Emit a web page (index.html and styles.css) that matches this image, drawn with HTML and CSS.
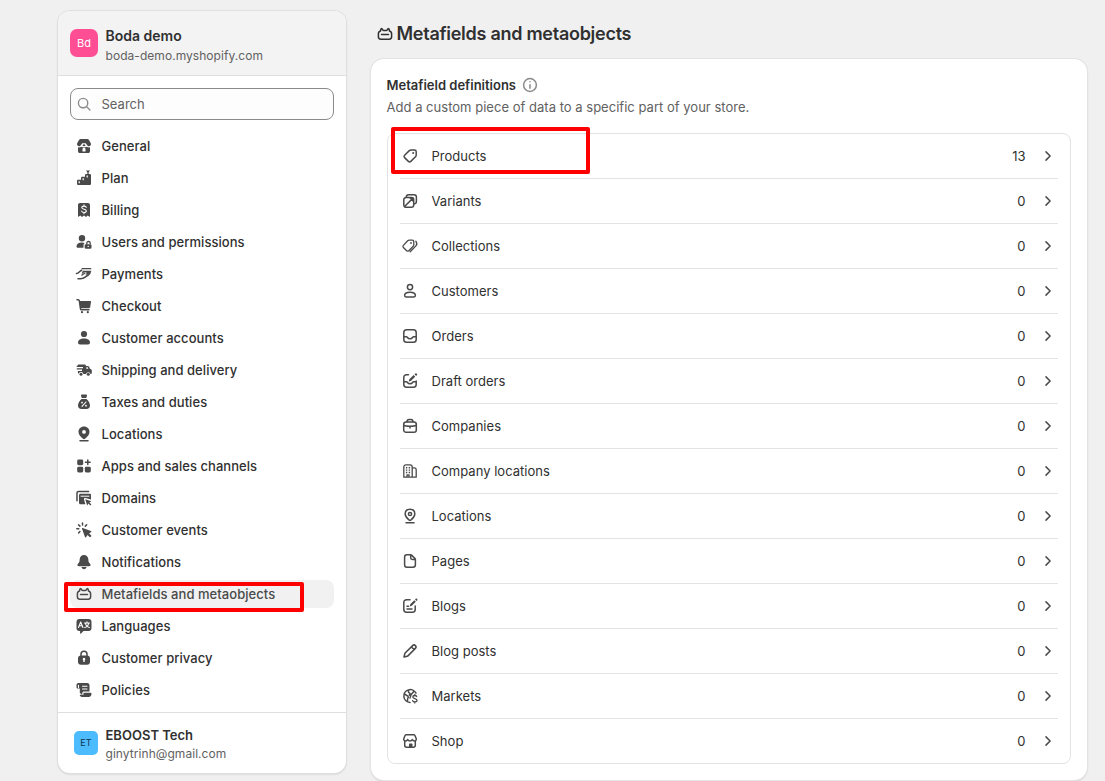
FILE: index.html
```html
<!DOCTYPE html>
<html lang="en">
<head>
<meta charset="utf-8">
<title>Metafields and metaobjects</title>
<link rel="stylesheet" href="styles.css">
</head>
<body>
<svg class="sprite" aria-hidden="true">
  <symbol id="store" viewBox="0 0 20 20"><path class="f" d="M6.500 3h7c.6 0 1.100.3 1.300.8L16.700 7c.3.6.3 1 .3 1.300 0 1.100-.9 1.900-2.100 1.900-1 0-1.700-.6-2.100-1.500L11.800 7.300H8.200L7.200 8.700c-.4.900-1.100 1.500-2.100 1.500C3.900 10.200 3 9.400 3 8.300 3 8 3.100 7.500 3.300 7l1.900-3.200c.2-.5.700-.8 1.300-.8z"/><path class="f" d="M10 7.800l1.700 2c-1 .6-2.400.6-3.400 0z"/><path class="f" fill-rule="evenodd" d="M4 11.300c1.300.3 2.300 0 3.300-.6 1.700.9 3.700.9 5.400 0 1 .6 2 .9 3.300.6v3.900c0 1-.8 1.800-1.800 1.800H5.800c-1 0-1.800-.8-1.800-1.800zm4.500 4.200h3V13c0-.5-.4-.9-.9-.9H9.400c-.5 0-.9.4-.9.900z"/></symbol>
  <symbol id="plan" viewBox="0 0 20 20"><path class="f" fill-rule="evenodd" d="M3 13c0-.8.600-1.300 1.300-1.300H7V10c0-.8.6-1.300 1.300-1.300H11V7.300C11 6.500 11.600 6 12.300 6h3.400c.7 0 1.300.5 1.300 1.300v8.400c0 .7-.6 1.300-1.300 1.300H4.300C3.600 17 3 16.400 3 15.700zm1.600.3v2h1.200v-2zm4-3v2h1.200v-2zm4-2.700v2h1.200v-2z"/><path class="f" d="M12 2.500h4l-1.300 1.700h-1.400z"/><path class="s thin" d="M14 3.700V6"/></symbol>
  <symbol id="billing" viewBox="0 0 20 20"><path class="f" d="M6 3h8c1.100 0 2 .9 2 2v12l-2.300-1.500L12 17l-2-1.500L8 17l-1.700-1.500L4 17V5c0-1.100.9-2 2-2z"/><path class="w" d="M12.300 7.300c-.3-.8-1.100-1.200-2.300-1.200-1.400 0-2.200.6-2.200 1.500 0 2.300 4.500 1 4.500 3.300 0 1-.9 1.600-2.300 1.600-1.200 0-2.100-.5-2.300-1.400M10 4.900v1.200m0 6.400v1.200"/></symbol>
  <symbol id="users" viewBox="0 0 20 20"><circle class="f" cx="8" cy="6.200" r="3.200"/><path class="f" d="M2.500 14.500c0-2.600 2.200-4 5.300-4 1.100 0 2.100.200 2.900.6-.8.600-1.200 1.200-1.200 2.200v2.500H4c-.9 0-1.500-.5-1.500-1.300z"/><rect class="f" x="10.700" y="12.200" width="6.800" height="4.600" rx="1.200"/><path class="s thin" d="M12.800 12.300v-1a1.700 1.700 0 013.400-.2v.6"/><circle cx="14.200" cy="14.400" r=".7" fill="#fff"/></symbol>
  <symbol id="payments" viewBox="0 0 20 20"><path class="f" d="M8.300 4h7.700c1 0 1.500.5 1.500 1.200H7.200C7.500 4.500 7.800 4 8.300 4zM9 6.800h8.300l-.8 2.700c-.2.800-.7 1.300-1.500 1.300h-3.600c1-.8 1.400-1.600.9-2.300-.5-.7-1.500-.5-2.400.1l-2 1.300c.1-1 .3-2 1.100-3.100z"/><path class="s" d="M2.500 9.600c2.500-.3 3.300-3.100 5.300-3.400M8 11l3-2M4 14.800h2.500c4.500 0 4.500-2.500 8-3.800"/></symbol>
  <symbol id="cart" viewBox="0 0 20 20"><path class="s" d="M3 3.700h1.200c.6 0 1 .4 1.100 1L6.500 13c.1.500.4.700.8.700H15"/><path class="f" d="M5.300 5h11c.5 0 .8.400.7.900l-.8 5.200c-.1.700-.6 1.200-1.300 1.200H6.300z"/><circle class="f" cx="8" cy="16.200" r="1.100"/><circle class="f" cx="13.800" cy="16.200" r="1.100"/></symbol>
  <symbol id="person" viewBox="0 0 20 20"><circle class="f" cx="10" cy="6" r="3.100"/><path class="f" d="M4 14.500c0-2.400 2.400-4 6-4s6 1.600 6 4c0 1.200-.8 2-2 2H6c-1.200 0-2-.8-2-2z"/></symbol>
  <symbol id="truck" viewBox="0 0 20 20"><path class="f" fill-rule="evenodd" d="M4.500 4.500h6c.9 0 1.500.6 1.500 1.500h1.800c.6 0 1 .3 1.300.8l.9 2 1 .5c.6.300.8.700.8 1.300v2.200c0 .8-.5 1.300-1.200 1.300A2.400 2.400 0 0012 14H9.400a2.400 2.400 0 00-4.700-.3c-.5-.1-.8-.5-.8-1.100V10.900H8V9.600H3.300a.7.700 0 010-1.400H9V7H3.300a.7.700 0 010-1.400h.5c0-.7.200-1.100.7-1.100zM12.300 7.300v1.500h2l-.6-1.500z"/><circle cx="7" cy="14.300" r="1.500" class="f"/><circle cx="14.300" cy="14.300" r="1.500" class="f"/></symbol>
  <symbol id="tax" viewBox="0 0 20 20"><path class="f" d="M7 3.700C7 3 7.400 2.600 8 2.600h4c.6 0 1 .4 1 1.100L12.200 6H7.800zM7.600 7h4.800c2 1.600 3.600 4 3.600 6.500 0 2-1.300 3.500-3.500 3.500h-5C5.300 17 4 15.500 4 13.500 4 11 5.600 8.600 7.600 7z"/><path class="w" d="M12 10l-4 4.300"/><circle cx="8" cy="10.600" r=".9" fill="#fff"/><circle cx="12" cy="13.700" r=".9" fill="#fff"/></symbol>
  <symbol id="pinfill" viewBox="0 0 20 20"><path class="f" fill-rule="evenodd" d="M10 2.500c3.200 0 5.500 2.300 5.500 5.300 0 3.200-2.400 5.200-4.200 6.800-.8.700-1.800.7-2.600 0-1.800-1.600-4.200-3.600-4.200-6.800 0-3 2.300-5.300 5.500-5.300zm0 7.300a1.900 1.900 0 100-3.800 1.900 1.900 0 000 3.800z"/><path class="s" d="M6 16.800h8"/></symbol>
  <symbol id="apps" viewBox="0 0 20 20"><rect class="f" x="3.200" y="3.500" width="6" height="5.700" rx="1.400"/><rect class="f" x="3.200" y="10.800" width="6" height="5.700" rx="1.400"/><rect class="f" x="10.800" y="10.800" width="6" height="5.700" rx="1.400"/><path class="s" d="M13.800 4v4.600M11.500 6.300h4.600"/></symbol>
  <symbol id="domains" viewBox="0 0 20 20"><path class="s" d="M3 12.800V5c0-1 .7-1.600 1.600-1.600h10"/><path class="f" d="M6.500 5.700h9.200c.8 0 1.300.5 1.300 1.300v4.500L11.500 10c-1-.3-1.800.5-1.500 1.500l1.400 4.700H6.500c-.9 0-1.500-.6-1.500-1.500V7.200c0-.9.600-1.500 1.500-1.500z"/><path d="M6.600 8.200h8.800" stroke="#fff"/><path class="f" d="M11.200 11.200l6.200 2-2 1.200 2 2-1 1-2-2-1.200 2z"/></symbol>
  <symbol id="click" viewBox="0 0 20 20"><path class="s" d="M8.500 3v2M4.500 4.700L5.900 6.100M2.800 8.800h2M12.700 4.700l-1.400 1.400M5.900 11.600L4.600 13"/><path class="f" d="M8.700 7.900l8.300 3c.6.200.6.900.1 1.200l-2 1.400 2.100 2c.6.600-1 2.200-1.600 1.600l-2.100-2-1.300 2c-.3.500-1 .4-1.200-.2L8 8.700c-.2-.5.200-.9.700-.8z"/></symbol>
  <symbol id="bell" viewBox="0 0 20 20"><path class="f" d="M10 3c2.500 0 4.100 1.700 4.300 4l.2 2.300c.1.600.3 1 .7 1.500l1 1.200c.9 1.200.2 2.300-1 2.300H4.800c-1.200 0-1.900-1.100-1-2.300l1-1.200c.4-.5.600-.9.700-1.500L5.700 7C5.900 4.700 7.500 3 10 3zM7.500 15h5c-.1 1.300-1.100 2.200-2.500 2.200S7.600 16.300 7.500 15z"/></symbol>
  <symbol id="meta" viewBox="0 0 20 20"><path class="s" d="M5.500 7.100l.3-1.800c.1-.7.900-.9 1.300-.4l.7 1.100c.2.400.5.600 1 .6h2.400c.5 0 .8-.2 1-.6l.7-1.100c.4-.5 1.200-.3 1.300.4l.3 1.800c1.400.3 2.100 1.300 2.100 2.700v3c0 1.500-.9 2.400-2.400 2.400H5.800c-1.500 0-2.400-.9-2.400-2.400v-3c0-1.400.7-2.400 2.100-2.700zM6.500 10.500h7"/></symbol>
  <symbol id="language" viewBox="0 0 20 20"><path class="f" d="M5.500 3h9C16.500 3 17.500 4 17.500 6v6c0 2-1 3-3 3h-5L7 17.500c-.4.400-.9.200-.9-.4V15h-.6c-2 0-3-1-3-3V6c0-2 1-3 3-3z"/><path class="w" d="M4.500 11.500L6.700 6l2.200 5.500M5.300 9.700h2.800M10.500 7h5M13 5.800V7m1.500 0c0 2-1.700 4-3.800 4.500m.7-4.500c.3 2 1.900 4 4 4.500"/></symbol>
  <symbol id="lock" viewBox="0 0 20 20"><path class="s" d="M7 8V6.300a3 3 0 016 0V8"/><path class="f" fill-rule="evenodd" d="M7 7.500h6c1.900 0 3 1.100 3 3v3.200c0 1.900-1.100 3-3 3H7c-1.900 0-3-1.100-3-3v-3.200c0-1.900 1.100-3 3-3zm2.300 4.800V14h1.400v-1.700a1.300 1.300 0 10-1.400 0z"/></symbol>
  <symbol id="policy" viewBox="0 0 20 20"><path class="f" d="M4.500 3h8.700C14.700 3 15.500 4 15.500 5.300v6.200H10c-1 0-1.700.7-1.700 1.700v1.500L5.800 13V8.500H4C3 8.500 2.500 8 2.500 7V5c0-1.200.8-2 2-2z"/><path class="f" d="M9.500 12.800h7.200c.5 0 .8.300.8.800 0 2-1 3.400-3 3.400H8c-1.300 0-2.200-.9-2.200-2.200h3.700z"/><path class="w" d="M4.500 7.500V5.200M8.500 6.200H13M8.500 9H13"/></symbol>
  <symbol id="search" viewBox="0 0 20 20"><circle class="s" cx="9" cy="9" r="5.200"/><path class="s" d="M12.900 12.900l3.700 3.700"/></symbol>
  <symbol id="info" viewBox="0 0 20 20"><circle class="s" cx="10" cy="10" r="6.400"/><path class="s" d="M10 9.700v3.500M10 6.700v.1"/></symbol>
  <symbol id="tag" viewBox="0 0 20 20"><path class="s" d="M11.200 4h3.300c1 0 1.700.7 1.700 1.700V9c0 .7-.2 1.200-.7 1.700l-4.700 4.700c-.7.700-1.700.7-2.400 0l-3.800-3.800c-.7-.7-.7-1.700 0-2.400l4.700-4.600c.6-.5 1.200-.6 1.900-.6z"/><circle class="f" cx="13.200" cy="7" r="1"/></symbol>
  <symbol id="variant" viewBox="0 0 20 20"><path class="s" d="M6.300 6.300V6c0-1.400.9-2.300 2.300-2.300H14c1.500 0 2.400.9 2.400 2.400v4.500c0 1.500-.9 2.300-2.300 2.300h-.3"/><rect class="s" x="3.800" y="6.400" width="9.900" height="9.900" rx="2.300"/><path class="s" d="M4.800 15.300l8.200-8.200M10.300 7.200l2.600.1v2.600"/></symbol>
  <symbol id="collection" viewBox="0 0 20 20"><path class="s thin" d="M9.200 4.200h3c1 0 1.600.6 1.600 1.600v3c0 .6-.2 1.100-.6 1.500l-4.400 4.400c-.6.6-1.500.6-2.100 0l-3.300-3.200c-.6-.6-.6-1.500 0-2.100l4.300-4.600c.4-.4.900-.6 1.500-.6zM15.800 5.200l.4.600c.9 1.500.7 3.100-.5 4.300l-5.500 5.700"/><circle class="f" cx="11" cy="7" r=".9"/></symbol>
  <symbol id="customer" viewBox="0 0 20 20"><circle class="s" cx="10" cy="6.100" r="2.600"/><path class="s" d="M4.600 14.600c0-2 2-3.300 5.400-3.300s5.400 1.300 5.400 3.300c0 .8-.6 1.400-1.400 1.400H6c-.8 0-1.400-.6-1.400-1.400z"/></symbol>
  <symbol id="order" viewBox="0 0 20 20"><rect class="s" x="3.800" y="3.800" width="12.400" height="12.400" rx="2.800"/><path class="s" d="M4 10.800h2.300c.6 0 .9.300 1.200.7.500.8 1.300 1.200 2.500 1.200s2-.4 2.500-1.200c.3-.4.600-.7 1.200-.7H16"/></symbol>
  <symbol id="draft" viewBox="0 0 20 20"><path class="s" d="M8.500 3.800h-2c-1.600 0-2.700 1.100-2.700 2.700v7c0 1.600 1.100 2.700 2.700 2.700h7c1.600 0 2.700-1.100 2.700-2.700V10M4 10.800h2.300c.6 0 .9.300 1.200.7.500.8 1.300 1.200 2.500 1.200s2-.4 2.500-1.200c.3-.4.600-.7 1.200-.7H16"/><path class="f" d="M9.300 8.300l4.300-4.200 1.600 1.600-4.300 4.200-2.200.6zM14.500 3.300l.9-.9c.3-.3.800-.3 1.100 0l.5.500c.3.300.3.800 0 1.100l-.9.900z"/></symbol>
  <symbol id="company" viewBox="0 0 20 20"><rect class="s" x="3.700" y="6" width="12.600" height="10.200" rx="2.300"/><path class="s" d="M7 5.800c0-1.500.7-2.300 2-2.300h2c1.300 0 2 .8 2 2.300M4 9.300c1.800 1.300 10.200 1.300 12 0M10 10.300V12"/></symbol>
  <symbol id="building" viewBox="0 0 20 20"><path class="s thin" d="M12.200 6.800h2c1.300 0 2 .8 2 2v7.400H3.800V6c0-1.400.8-2.200 2.200-2.200h4c1.400 0 2.200.8 2.200 2.200v10M7 16v-2.200h2V16"/><path class="dots" d="M5.900 6.700h1.400M8.700 6.700h1.400M5.900 9.100h1.400M8.700 9.100h1.400M5.900 11.500h1.400M8.700 11.500h1.400"/></symbol>
  <symbol id="pin" viewBox="0 0 20 20"><path class="s" d="M10 3.200c2.900 0 4.800 2 4.800 4.700 0 3-2.300 4.700-3.900 6.100-.6.500-1.200.5-1.800 0-1.600-1.400-3.900-3.100-3.900-6.100 0-2.700 1.900-4.700 4.800-4.700zM6 16.800h8"/><circle class="s" cx="10" cy="8" r="1.600"/></symbol>
  <symbol id="page" viewBox="0 0 20 20"><path class="s" d="M6.800 3.800h3.700c.5 0 .9.200 1.300.6l3 3c.4.400.6.800.6 1.300v5c0 1.500-1 2.500-2.500 2.500h-6c-1.500 0-2.300-1-2.300-2.500V6.300c0-1.500.8-2.500 2.200-2.500zM10.700 4v2.800c0 1 .6 1.600 1.600 1.600h2.900"/></symbol>
  <symbol id="blog" viewBox="0 0 20 20"><path class="s" d="M10 3.800H6.500c-1.600 0-2.700 1.100-2.700 2.700v7c0 1.600 1.100 2.700 2.700 2.700h6c1.600 0 2.700-1.100 2.700-2.700V10M7 10.200h1.500M7 13h5"/><path class="f" d="M10.300 8.300l4-4 1.500 1.500-4 4-2.100.6zM15 3.600l.8-.8c.3-.3.800-.3 1.100 0l.4.400c.3.300.3.800 0 1.100l-.8.800z"/></symbol>
  <symbol id="pencil" viewBox="0 0 20 20"><path class="s" d="M4 16l.8-3.200c.1-.4.300-.7.600-1l7.200-7.200c.8-.8 2-.8 2.800 0s.8 2 0 2.800l-7.200 7.200c-.3.300-.6.500-1 .6zM11.500 6l2.500 2.500"/></symbol>
  <symbol id="market" viewBox="0 0 20 20"><path class="s" d="M16 7.200A6.400 6.400 0 1010 16.400M4 8c1.600.2 2 1.500 3.400 1.800 1.200.3 1 1.800.3 2.500l-.3 3.200M9 4c-1 1.200-.8 2.400.4 3 .9.500.7 1.400-.1 2.100M10 12c.3-2.800 1.300-4.300 3.700-6.300"/><path class="s thin" d="M16.700 10.500c-.3-.7-1-1-1.900-1-1.200 0-2 .6-2 1.500 0 2.200 4.200 1 4.200 3.300 0 1-.9 1.600-2.100 1.600-1.100 0-1.900-.4-2.200-1.200M14.800 8.500v.9m0 6.500v1"/></symbol>
  <symbol id="shop" viewBox="0 0 20 20"><path class="s" d="M6.200 3.800h7.600c.5 0 .9.300 1.100.7l1.200 2.800c.6 1.400-.2 2.700-1.600 2.700-1 0-1.800-.6-2.200-1.500-.4.900-1.200 1.500-2.300 1.500s-1.900-.6-2.300-1.500C7.300 9.400 6.500 10 5.500 10c-1.400 0-2.200-1.300-1.600-2.700l1.200-2.800c.2-.4.600-.7 1.100-.7zM4.700 10v4.200c0 1.300.7 2 2 2h6.600c1.300 0 2-.7 2-2V10"/><path class="f" d="M9 16v-2.500c0-.6.400-1 1-1h1.500c.6 0 1 .4 1 1V16z"/></symbol>
  <symbol id="chevron" viewBox="0 0 20 20"><path class="s" d="M8 5.900l4.100 4.100L8 14.100"/></symbol>
</svg>
<div class="settings">
  <aside class="sidebar">
    <header class="store">
      <span class="avatar avatar-store">Bd</span>
      <div class="identity"><strong>Boda demo</strong><span>boda-demo.myshopify.com</span></div>
    </header>
    <div class="search"><svg class="icon"><use href="#search"/></svg><span>Search</span></div>
    <nav class="nav">
      <a class="nav-item"><svg class="icon"><use href="#store"/></svg>General</a>
      <a class="nav-item"><svg class="icon"><use href="#plan"/></svg>Plan</a>
      <a class="nav-item"><svg class="icon"><use href="#billing"/></svg>Billing</a>
      <a class="nav-item"><svg class="icon"><use href="#users"/></svg>Users and permissions</a>
      <a class="nav-item"><svg class="icon"><use href="#payments"/></svg>Payments</a>
      <a class="nav-item"><svg class="icon"><use href="#cart"/></svg>Checkout</a>
      <a class="nav-item"><svg class="icon"><use href="#person"/></svg>Customer accounts</a>
      <a class="nav-item"><svg class="icon"><use href="#truck"/></svg>Shipping and delivery</a>
      <a class="nav-item"><svg class="icon"><use href="#tax"/></svg>Taxes and duties</a>
      <a class="nav-item"><svg class="icon"><use href="#pinfill"/></svg>Locations</a>
      <a class="nav-item"><svg class="icon"><use href="#apps"/></svg>Apps and sales channels</a>
      <a class="nav-item"><svg class="icon"><use href="#domains"/></svg>Domains</a>
      <a class="nav-item"><svg class="icon"><use href="#click"/></svg>Customer events</a>
      <a class="nav-item"><svg class="icon"><use href="#bell"/></svg>Notifications</a>
      <a class="nav-item active"><svg class="icon"><use href="#meta"/></svg>Metafields and metaobjects<span class="mark mark-nav"></span></a>
      <a class="nav-item"><svg class="icon"><use href="#language"/></svg>Languages</a>
      <a class="nav-item"><svg class="icon"><use href="#lock"/></svg>Customer privacy</a>
      <a class="nav-item"><svg class="icon"><use href="#policy"/></svg>Policies</a>
    </nav>
    <footer class="account">
      <span class="avatar avatar-user">ET</span>
      <div class="identity"><strong>EBOOST Tech</strong><span>ginytrinh@gmail.com</span></div>
    </footer>
  </aside>
  <main class="content">
    <h1 class="title"><svg class="icon"><use href="#meta"/></svg><span>Metafields and metaobjects</span></h1>
    <section class="card">
      <h2 class="heading"><span>Metafield definitions</span><svg class="icon"><use href="#info"/></svg></h2>
      <p class="description">Add a custom piece of data to a specific part of your store.</p>
      <div class="list">
        <a class="row"><svg class="icon"><use href="#tag"/></svg><span class="name">Products</span><span class="count">13</span><svg class="icon"><use href="#chevron"/></svg><span class="mark mark-row"></span></a>
        <a class="row"><svg class="icon"><use href="#variant"/></svg><span class="name">Variants</span><span class="count">0</span><svg class="icon"><use href="#chevron"/></svg></a>
        <a class="row"><svg class="icon"><use href="#collection"/></svg><span class="name">Collections</span><span class="count">0</span><svg class="icon"><use href="#chevron"/></svg></a>
        <a class="row"><svg class="icon"><use href="#customer"/></svg><span class="name">Customers</span><span class="count">0</span><svg class="icon"><use href="#chevron"/></svg></a>
        <a class="row"><svg class="icon"><use href="#order"/></svg><span class="name">Orders</span><span class="count">0</span><svg class="icon"><use href="#chevron"/></svg></a>
        <a class="row"><svg class="icon"><use href="#draft"/></svg><span class="name">Draft orders</span><span class="count">0</span><svg class="icon"><use href="#chevron"/></svg></a>
        <a class="row"><svg class="icon"><use href="#company"/></svg><span class="name">Companies</span><span class="count">0</span><svg class="icon"><use href="#chevron"/></svg></a>
        <a class="row"><svg class="icon"><use href="#building"/></svg><span class="name">Company locations</span><span class="count">0</span><svg class="icon"><use href="#chevron"/></svg></a>
        <a class="row"><svg class="icon"><use href="#pin"/></svg><span class="name">Locations</span><span class="count">0</span><svg class="icon"><use href="#chevron"/></svg></a>
        <a class="row"><svg class="icon"><use href="#page"/></svg><span class="name">Pages</span><span class="count">0</span><svg class="icon"><use href="#chevron"/></svg></a>
        <a class="row"><svg class="icon"><use href="#blog"/></svg><span class="name">Blogs</span><span class="count">0</span><svg class="icon"><use href="#chevron"/></svg></a>
        <a class="row"><svg class="icon"><use href="#pencil"/></svg><span class="name">Blog posts</span><span class="count">0</span><svg class="icon"><use href="#chevron"/></svg></a>
        <a class="row"><svg class="icon"><use href="#market"/></svg><span class="name">Markets</span><span class="count">0</span><svg class="icon"><use href="#chevron"/></svg></a>
        <a class="row"><svg class="icon"><use href="#shop"/></svg><span class="name">Shop</span><span class="count">0</span><svg class="icon"><use href="#chevron"/></svg></a>
      </div>
    </section>
  </main>
</div>
</body>
</html>
```

FILE: styles.css
```css
* { box-sizing: border-box; }
html { height: 100%; overflow: hidden; }
body {
  height: 781px;
  margin: 0;
  overflow: hidden;
  background: #f0f0f0;
  color: #303030;
  font: 400 13px/20px Inter, "Liberation Sans", sans-serif;
  letter-spacing: 0.02px;
}
.sprite { display: none; }
.icon { display: block; flex: none; width: 20px; height: 20px; color: #4a4a4a; }
.f { fill: currentColor; }
.s { fill: none; stroke: currentColor; stroke-width: 1.5; stroke-linecap: round; stroke-linejoin: round; }
.thin { stroke-width: 1.3; }
.w { fill: none; stroke: #fff; stroke-width: 1.1; stroke-linecap: round; stroke-linejoin: round; }
.dots { fill: none; stroke: currentColor; stroke-width: 1.4; }

.settings { display: flex; align-items: flex-start; gap: 25px; padding: 11px 18px 0 58px; }
.sidebar {
  width: 288px;
  height: 762px;
  border-radius: 12px;
  background: #fff;
  box-shadow: 0 0 0 1px #e0e0e0, 0 1px 2px #b5b5b5;
  overflow: hidden;
}
.store { display: flex; gap: 7.5px; height: 65px; padding: 14px 12px 0; background: #f3f3f3; border-bottom: 1px solid #dedede; }
.avatar { display: flex; align-items: center; justify-content: center; flex: none; }
.avatar-store { width: 28px; height: 28px; margin-top: 4px; border-radius: 7px; background: #ff4e94; color: #fff; font-size: 11px; }
.avatar-user { width: 24px; height: 24px; margin-top: 6px; border-radius: 5px; background: #4dbcff; color: #10344a; font-size: 9px; }
.identity { display: flex; flex-direction: column; font-size: 12px; line-height: 18px; letter-spacing: 0.05px; color: #616161; }
.identity strong { font-size: 14px; line-height: 22px; font-weight: 600; letter-spacing: 0; color: #303030; }
.search {
  display: flex;
  align-items: center;
  gap: 8.5px;
  height: 32px;
  margin: 12px;
  padding: 0 4px;
  border: 1px solid #8a8a8a;
  border-radius: 8px;
  background: #fdfdfd;
  color: #616161;
}
.search .icon { width: 18px; color: #8a8a8a; }
.nav { display: flex; flex-direction: column; gap: 4px; padding: 0 12px; }
.nav-item {
  position: relative;
  display: flex;
  align-items: center;
  gap: 7.5px;
  height: 28px;
  padding: 0 4px;
  border-radius: 8px;
  font-weight: 550;
  letter-spacing: 0.05px;
}
.active { background: #f1f1f1; color: #4a4a4a; }
.account { display: flex; gap: 7.5px; margin-top: 8px; padding: 12px 16px; border-top: 1px solid #dedede; }
.account .identity { line-height: 16px; }
.account strong { font-size: 13px; line-height: 21px; }

.content { flex: 1; min-width: 0; padding-top: 9px; }
.title {
  display: flex;
  align-items: center;
  gap: 1.5px;
  height: 28px;
  margin: 0 0 11px 4px;
  font-size: 18px;
  font-weight: 600;
  letter-spacing: -0.27px;
}
.title .icon { color: #303030; }
.card { height: 721px; padding: 16px 16px 16px 15.5px; border-radius: 13px; background: #fff; box-shadow: 0 0 0 1px #e3e3e3, 0 1px 2px #b5b5b5; }
.heading { display: flex; align-items: center; gap: 3.5px; height: 20px; margin: 0; font-size: 13px; font-weight: 600; letter-spacing: 0; }
.heading .icon { color: #8a8a8a; }
.description { margin: 2px 0 16px; color: #616161; }
.list { height: 631px; margin-left: 0.5px; padding: 0 12px; border: 1px solid #e3e3e3; border-radius: 8px; }
.row { position: relative; display: flex; align-items: center; height: 45px; border-bottom: 1px solid #e3e3e3; }
.row:last-child { border-bottom-color: transparent; }
.name { flex: 1; margin-left: 11.5px; }
.count { margin-right: 12.5px; }
.mark { position: absolute; border: 4px solid #f00; border-radius: 2px; }
.mark-nav { left: -6px; top: 2px; width: 240px; height: 30px; }
.mark-row { left: -9px; top: -7px; width: 199px; height: 47px; }
```
